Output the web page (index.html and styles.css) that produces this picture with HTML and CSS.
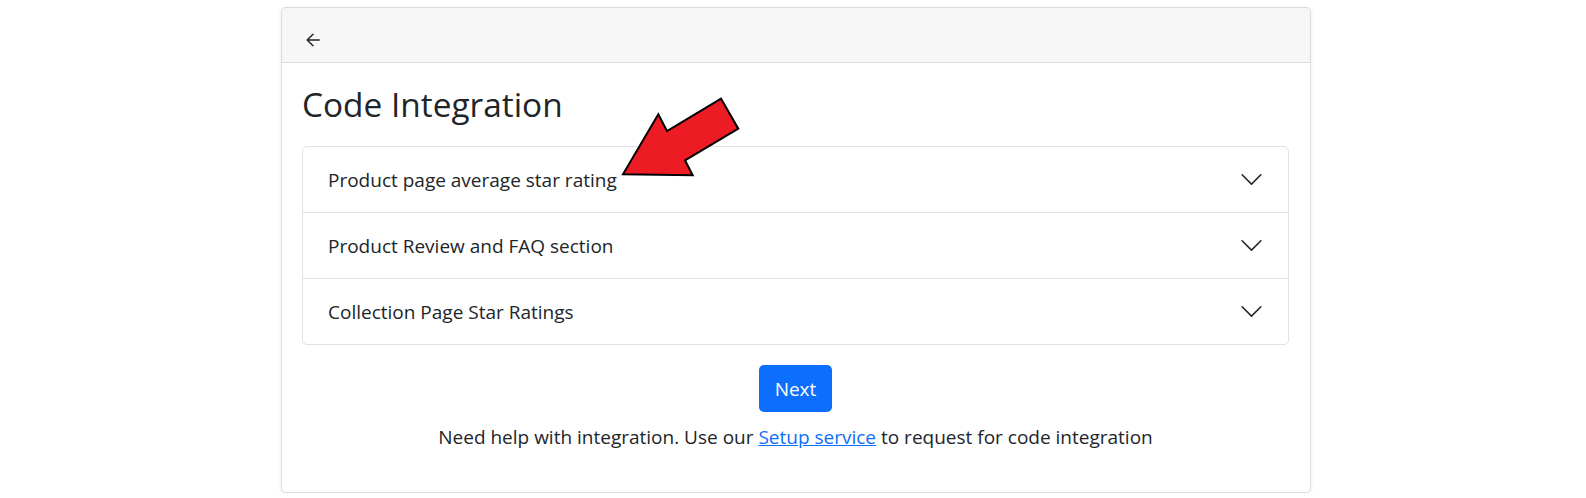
FILE: index.html
```html
<!DOCTYPE html>
<html lang="en">
<head>
<meta charset="utf-8">
<title>Code Integration</title>
<link rel="stylesheet" href="styles.css">
</head>
<body>
<div class="page">
  <div class="card">
    <div class="card-header">
      <button class="back" aria-label="Back">
        <svg width="14" height="14" viewBox="0 0 14 14"><path d="M13.2 7H1.4M7 1.2L1.2 7 7 12.8" fill="none" stroke="#212529" stroke-width="1.5" stroke-linecap="round" stroke-linejoin="round"/></svg>
      </button>
    </div>
    <div class="card-body">
      <h1 class="title">Code Integration</h1>
      <div class="accordion">
        <div class="acc-item">
          <span class="acc-label">Product page average star rating</span>
          <svg class="chev" width="25" height="25" viewBox="0 0 16 16"><path fill="#212529" fill-rule="evenodd" d="M1.646 4.646a.5.5 0 0 1 .708 0L8 10.293l5.646-5.647a.5.5 0 0 1 .708.708l-6 6a.5.5 0 0 1-.708 0l-6-6a.5.5 0 0 1 0-.708z"/></svg>
        </div>
        <div class="acc-item">
          <span class="acc-label">Product Review and FAQ section</span>
          <svg class="chev" width="25" height="25" viewBox="0 0 16 16"><path fill="#212529" fill-rule="evenodd" d="M1.646 4.646a.5.5 0 0 1 .708 0L8 10.293l5.646-5.647a.5.5 0 0 1 .708.708l-6 6a.5.5 0 0 1-.708 0l-6-6a.5.5 0 0 1 0-.708z"/></svg>
        </div>
        <div class="acc-item">
          <span class="acc-label">Collection Page Star Ratings</span>
          <svg class="chev" width="25" height="25" viewBox="0 0 16 16"><path fill="#212529" fill-rule="evenodd" d="M1.646 4.646a.5.5 0 0 1 .708 0L8 10.293l5.646-5.647a.5.5 0 0 1 .708.708l-6 6a.5.5 0 0 1-.708 0l-6-6a.5.5 0 0 1 0-.708z"/></svg>
        </div>
      </div>
      <div class="actions">
        <button class="btn-next">Next</button>
      </div>
      <p class="help">Need help with integration. Use our <a href="#">Setup service</a> to request for code integration</p>
    </div>
    <svg class="pointer" width="130" height="90" viewBox="0 0 130 90">
      <polygon points="2,77.3 37.3,17.3 46,34 100,1.7 117.3,31.7 64,63.3 71.7,78.3" fill="#ed1c24" stroke="#000" stroke-width="2" stroke-linejoin="miter"/>
    </svg>
  </div>
</div>
</body>
</html>
```
FILE: styles.css
```css
* { box-sizing: border-box; }
html, body { margin: 0; padding: 0; background: #fff; }
body {
  font-family: "Open Sans", "Noto Sans", "Liberation Sans", sans-serif;
  color: #212529;
  font-size: 19px;
}
.page {
  padding: 7px 0 0 281px;
}
.card {
  position: relative;
  width: 1030px;
  height: 486px;
  border: 1px solid #dcdcdc;
  border-radius: 5px;
  box-shadow: 0 1px 5px rgba(0,0,0,0.08);
  background: #fff;
}
.card-header {
  background: #f7f7f7;
  border-bottom: 1px solid #dcdcdc;
  border-radius: 5px 5px 0 0;
  padding: 25px 24px 15px;
  height: 55px;
}
.back {
  display: block;
  border: 0;
  background: none;
  padding: 0;
  width: 14px;
  height: 14px;
  cursor: pointer;
}
.back svg { display: block; }
.card-body {
  padding: 21px 21px 0 20px;
}
.title {
  margin: 0 0 22px 0;
  font-size: 33.4px;
  font-weight: 400;
  line-height: 40px;
}
.accordion {
  border: 1px solid #dee2e6;
  border-radius: 5px;
}
.acc-item {
  display: flex;
  align-items: center;
  justify-content: space-between;
  height: 65px;
  padding: 0 24px 0 25px;
}
.acc-item + .acc-item {
  border-top: 1px solid #dee2e6;
  height: 66px;
}
.acc-label {
  font-size: 19px;
}
.chev { display: block; }
.actions {
  display: flex;
  justify-content: center;
  margin-top: 20px;
}
.btn-next {
  width: 73px;
  height: 47px;
  border: 0;
  border-radius: 5px;
  background: #0d6efd;
  color: #fff;
  font-family: inherit;
  font-size: 19px;
  padding: 0;
}
.help {
  margin: 11px 0 0;
  text-align: center;
  line-height: 1.5;
}
.help a { color: #0d6efd; text-decoration: underline; }
.pointer {
  position: absolute;
  left: 339px;
  top: 89px;
}
```
